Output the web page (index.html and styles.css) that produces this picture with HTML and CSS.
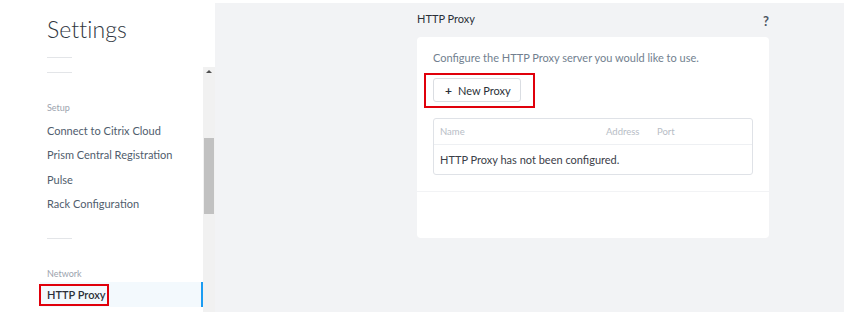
FILE: index.html
```html
<!DOCTYPE html>
<html>
<head>
<meta charset="utf-8">
<link rel="stylesheet" href="styles.css">
</head>
<body>
<div class="app">
  <aside class="sidebar">
    <div class="sidebar-head">
      <h1 class="sidebar-title">Settings</h1>
      <div class="rule"></div>
    </div>
    <div class="sidebar-body">
      <nav class="nav">
        <div class="rule rule-top"></div>
        <div class="nav-section">Setup</div>
        <a class="nav-item">Connect to Citrix Cloud</a>
        <a class="nav-item">Prism Central Registration</a>
        <a class="nav-item">Pulse</a>
        <a class="nav-item">Rack Configuration</a>
        <div class="rule rule-mid"></div>
        <div class="nav-section">Network</div>
        <a class="nav-item active"><span class="mark mark-nav">HTTP Proxy</span></a>
      </nav>
      <div class="scrollbar">
        <div class="scroll-arrow"></div>
        <div class="scroll-thumb"></div>
      </div>
    </div>
  </aside>
  <main class="main">
    <div class="content">
      <div class="page-head">
        <h2 class="page-title">HTTP Proxy</h2>
        <span class="help">?</span>
      </div>
      <section class="card">
        <div class="card-body">
          <p class="desc">Configure the HTTP Proxy server you would like to use.</p>
          <div class="btn-row">
            <span class="mark mark-btn"><button class="btn"><span class="plus">+</span>New Proxy</button></span>
          </div>
          <div class="table">
            <div class="thead">
              <span class="col-name">Name</span>
              <span class="col-addr">Address</span>
              <span class="col-port">Port</span>
            </div>
            <div class="tbody">HTTP Proxy has not been configured.</div>
          </div>
        </div>
        <div class="card-foot"></div>
      </section>
    </div>
  </main>
</div>
</body>
</html>
```
FILE: styles.css
```css
* { box-sizing: border-box; }
html, body { margin: 0; padding: 0; background: #fff; }
body { font-family: Lato, "Open Sans", sans-serif; color: #4b5563; }

.app {
  display: flex;
  margin-top: 3px;
  height: 309px;
}

.sidebar {
  width: 215px;
  display: flex;
  flex-direction: column;
  background: #fff;
}
.sidebar-head {
  height: 64px;
  padding-left: 47px;
}
.sidebar-title {
  margin: 0;
  padding-top: 12px;
  font-size: 23px;
  font-weight: 300;
  color: #2f3640;
  line-height: 28px;
  letter-spacing: 0.1px;
}
.rule {
  width: 25px;
  height: 1px;
  background: #e3e5e8;
}
.sidebar-head .rule { margin-top: 14px; }

.sidebar-body {
  flex: 1;
  display: flex;
  min-height: 0;
}
.nav {
  flex: 1;
  overflow: hidden;
  display: flex;
  flex-direction: column;
}
.nav .rule { margin-left: 47px; }
.rule-top { margin-top: 5px; }
.rule-mid { margin-top: 22px; }
.nav-section {
  padding-left: 47px;
  font-size: 9px;
  color: #9ba3ae;
  line-height: 12px;
  margin-top: 29px;
  margin-bottom: 4px;
}
.rule-mid + .nav-section { margin-top: 29px; margin-bottom: 2px; }
.nav-item {
  display: flex;
  align-items: center;
  height: 24.5px;
  padding-left: 47px;
  font-size: 11px;
  color: #505d6d;
}
.nav-item.active {
  height: 25px;
  margin-left: 40px;
  padding-left: 7px;
  background: #f3f9fd;
  border-right: 2px solid #1b9cf2;
  color: #2b3038;
  font-size: 11px;
  font-weight: 600;
}

.scrollbar {
  width: 12px;
  background: #f1f1f1;
  display: flex;
  flex-direction: column;
  align-items: center;
}
.scroll-arrow {
  margin-top: 3px;
  width: 0;
  height: 0;
  border-left: 3px solid transparent;
  border-right: 3px solid transparent;
  border-bottom: 3px solid #505050;
}
.scroll-thumb {
  margin-top: 65px;
  width: 10px;
  height: 76px;
  background: #c1c1c1;
}

.main {
  flex: 1;
  background: #f2f3f5;
  padding-left: 202px;
}
.content { width: 352px; }
.page-head {
  display: flex;
  justify-content: space-between;
  align-items: center;
  height: 34px;
  padding-bottom: 4px;
}
.page-title {
  margin: 0;
  font-size: 11px;
  font-weight: 400;
  color: #2b3038;
}
.help {
  font-size: 13px;
  font-weight: 700;
  color: #4d5561;
  margin-right: 0;
  margin-top: 5px;
}

.card {
  background: #fff;
  border-radius: 4px;
  height: 201px;
  display: flex;
  flex-direction: column;
}
.card-body {
  padding: 14px 16px 16px 16px;
  border-bottom: 1px solid #f2f3f5;
}
.desc {
  margin: 0;
  font-size: 11px;
  line-height: 14px;
  color: #727f8f;
}
.btn-row { margin-top: 13px; display: flex; }
.mark { position: relative; display: inline-flex; }
.mark::after {
  content: "";
  position: absolute;
  border: 2px solid #e0000b;
  pointer-events: none;
}
.mark-btn::after { left: -9px; right: -14px; top: -5px; bottom: -6px; }
.mark-nav::after { left: -8px; right: -3px; top: -4px; bottom: -5px; }

.btn {
  height: 24px;
  width: 88px;
  display: flex;
  align-items: center;
  padding: 0 0 0 11px;
  background: #fff;
  border: 1px solid #dadde2;
  border-radius: 3px;
  font-family: inherit;
  font-size: 11px;
  color: #2b3038;
}
.plus { font-weight: 700; font-size: 12px; margin-right: 6px; }

.table {
  margin-top: 16px;
  border: 1px solid #dfe2e7;
  border-radius: 3px;
}
.thead {
  display: flex;
  align-items: center;
  height: 26px;
  padding-left: 6px;
  border-bottom: 1px solid #eef0f3;
  font-size: 9.5px;
  color: #b7bdc6;
}
.col-name { width: 166px; }
.col-addr { width: 51px; }
.tbody {
  height: 29px;
  display: flex;
  align-items: center;
  padding-left: 6px;
  font-size: 11px;
  color: #3b4048;
}
.card-foot { flex: 1; }
```
